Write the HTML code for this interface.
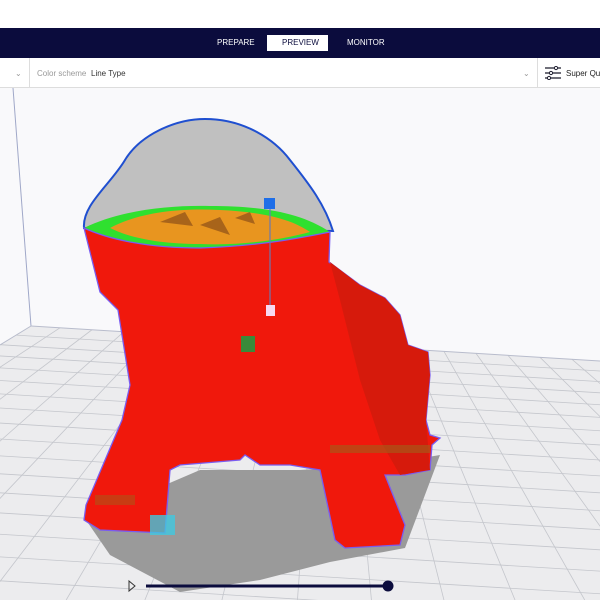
<!DOCTYPE html>
<html><head><style>
body{margin:0;width:600px;height:600px;overflow:hidden;background:#fff;font-family:"Liberation Sans",sans-serif;position:relative}
.nav{position:absolute;top:28px;left:0;width:600px;height:30px;background:#0b0c3d}
.nav span{position:absolute;top:10px;font-size:8px;color:#fff}
.tab{position:absolute;left:267px;top:7px;width:61px;height:16px;background:#fff}
.bar{position:absolute;top:58px;left:0;width:600px;height:29px;background:#fff;border-bottom:1px solid #ddd;overflow:hidden}
.bar span{position:absolute;top:11px;font-size:8px;white-space:nowrap}
</style></head><body>
<div class="nav"><div class="tab"></div>
<span style="left:217px">PREPARE</span><span style="left:282px;color:#0b0c3d">PREVIEW</span><span style="left:347px">MONITOR</span></div>
<div class="bar">
<span style="left:15px;color:#999">⌄</span>
<div style="position:absolute;left:29px;top:0;width:1px;height:29px;background:#ddd"></div>
<span style="left:37px;color:#999">Color scheme</span><span style="left:91px;color:#333">Line Type</span>
<span style="left:523px;color:#999">⌄</span>
<div style="position:absolute;left:537px;top:0;width:1px;height:29px;background:#ddd"></div>
<svg style="position:absolute;left:545px;top:8px" width="16" height="14"><g stroke="#223" stroke-width="1.3"><line x1="0" y1="2" x2="16" y2="2"/><line x1="0" y1="7" x2="16" y2="7"/><line x1="0" y1="12" x2="16" y2="12"/></g><g fill="#fff" stroke="#223"><circle cx="11" cy="2" r="1.6"/><circle cx="6" cy="7" r="1.6"/><circle cx="4" cy="12" r="1.6"/></g></svg>
<span style="left:566px;color:#222">Super Quality</span>
</div>
<svg id="v" style="position:absolute;left:0;top:88px" width="600" height="512" viewBox="0 88 600 512">
<defs><clipPath id="fl"><polygon points="0,345 31,326 600,361 600,600 0,600"/></clipPath></defs>
<rect x="0" y="88" width="600" height="512" fill="#f9f9fb"/>
<line x1="13" y1="88" x2="31" y2="326" stroke="#a0a8c8" stroke-width="1"/>
<polygon points="0,345 31,326 600,361 600,600 0,600" fill="#ececee"/>
<g id="grid" stroke="#c4c6cc" stroke-width="0.8" clip-path="url(#fl)"></g>
<line x1="0" y1="345" x2="31" y2="326" stroke="#b8bccc"/>
<line x1="31" y1="326" x2="600" y2="361" stroke="#b8bccc"/>
<polygon points="86,520 110,555 180,592 260,580 330,562 405,548 440,455 380,465 300,470 200,470 130,500" fill="#9a9a9a"/>
<path d="M84,228 C82,205 110,185 125,160 C140,135 175,119 205,119 C245,119 275,140 290,160 C310,185 325,205 333,231 Z" fill="#c0c0c0" stroke="#1f4fd0" stroke-width="2"/>
<path d="M84,228 C120,210 170,205 210,206 C260,206 300,212 330,232 C300,238 260,246 200,248 C150,248 110,240 84,228 Z" fill="#2fe02f"/>
<path d="M110,228 C140,212 180,208 220,210 C260,212 290,218 310,232 C280,240 240,246 200,244 C160,244 130,238 110,228 Z" fill="#e8951f"/>
<path d="M160,222 l25,-10 l8,14 z M200,225 l20,-8 l10,18 z M235,218 l15,-6 l5,12 z" fill="#a8641a"/>
<path d="M84,228 C110,240 150,248 200,248 C260,246 300,238 330,232 L329,262 L360,285 L385,298 L400,315 L408,345 L428,352 L430,375 L426,420 L430,435 L440,438 L432,445 L430,470 L405,475 L385,475 L405,525 L400,545 L345,548 L335,540 L320,470 L290,465 L260,465 L245,455 L240,460 L180,465 L170,470 L165,533 L100,530 L84,520 L86,505 L122,420 L130,385 L118,310 L100,292 Z" fill="#f0180c" stroke="#7a5cf0" stroke-width="1.3"/>
<path d="M330,262 L360,285 L385,298 L400,315 L408,345 L428,352 L430,375 L426,420 L430,470 L400,475 L380,440 L360,380 L340,300 Z" fill="#d61a0c"/>
<rect x="330" y="445" width="100" height="8" fill="#a0601a" opacity="0.6"/>
<rect x="95" y="495" width="40" height="10" fill="#a0601a" opacity="0.5"/>
<rect x="150" y="515" width="25" height="20" fill="#40c8e0" opacity="0.8"/>
<line x1="270" y1="205" x2="270" y2="312" stroke="#6a7ab0" stroke-width="1.2"/>
<rect x="264" y="198" width="11" height="11" fill="#1e6ee8"/>
<rect x="266" y="305" width="9" height="11" fill="#f8d8f0"/>
<rect x="241" y="336" width="14" height="16" fill="#3a8a3a"/>
<path d="M129,581 L135,586 L129,591 Z" fill="none" stroke="#333" stroke-width="1"/>
<line x1="146" y1="586" x2="388" y2="586" stroke="#0b0c3d" stroke-width="3"/>
<circle cx="388" cy="586" r="5.5" fill="#0b0c3d"/>
</svg>
<script>
var g=document.getElementById('grid'),s='';
function L(a,b,c,d){s+='<line x1="'+a+'" y1="'+b+'" x2="'+c+'" y2="'+d+'"/>';}
var off=0,st=10;
for(var i=0;i<22;i++){off+=st;st*=1.06;L(-200,326+(-231)*0.0615+off,600,361+off);}
var vx=330,vy=150;
for(var x=-900;x<=1200;x+=32){var y0=326+(x-31)*0.0615;var t=(600-vy)/(y0-vy);L(x,y0,vx+(x-vx)*t,600);}
g.innerHTML=s;
</script>
</body></html>
